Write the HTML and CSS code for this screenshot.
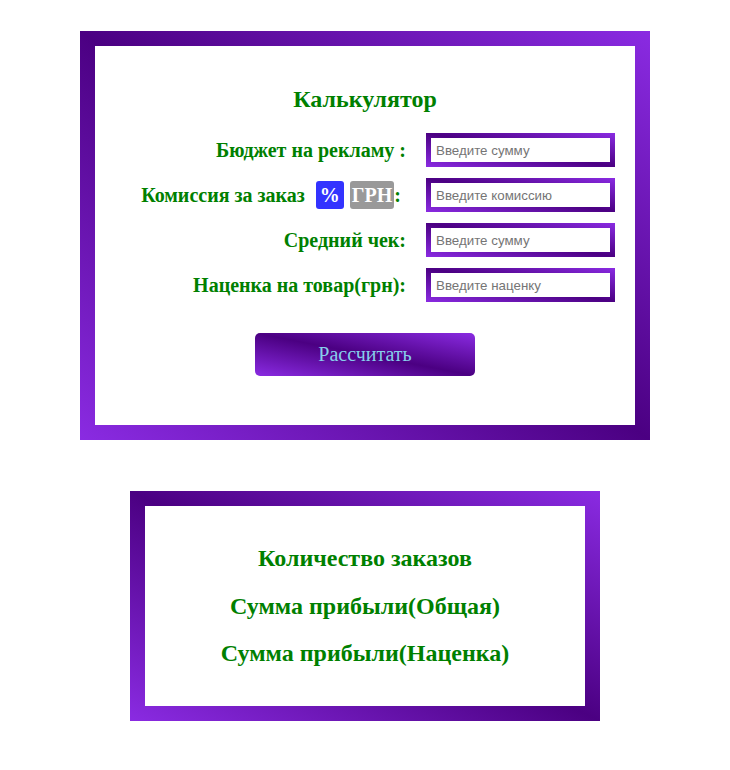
FILE: index.html
```html
<!DOCTYPE html>
<html lang="ru">
<head>
<meta charset="utf-8">
<title>Калькулятор</title>
<link rel="stylesheet" href="styles.css">
</head>
<body>
<main class="page">
  <section class="card calc">
    <h1 class="title">Калькулятор</h1>
    <form class="form">
      <label class="label" for="budget">Бюджет на рекламу :</label>
      <div class="field"><input id="budget" class="input" type="text" placeholder="Введите сумму"></div>

      <label class="label label-fee" for="fee">Комиссия за заказ <span class="badge badge-pct">%</span><span class="badge badge-uah">ГРН</span>:</label>
      <div class="field"><input id="fee" class="input" type="text" placeholder="Введите комиссию"></div>

      <label class="label" for="check">Средний чек:</label>
      <div class="field"><input id="check" class="input" type="text" placeholder="Введите сумму"></div>

      <label class="label" for="markup">Наценка на товар(грн):</label>
      <div class="field"><input id="markup" class="input" type="text" placeholder="Введите наценку"></div>
    </form>
    <div class="actions"><button class="btn" type="button">Рассчитать</button></div>
  </section>

  <section class="card results">
    <p class="result">Количество заказов</p>
    <p class="result">Сумма прибыли(Общая)</p>
    <p class="result">Сумма прибыли(Наценка)</p>
  </section>
</main>
</body>
</html>
```
FILE: styles.css
```css
html, body {
  margin: 0;
  padding: 0;
  background: #fff;
}
body {
  font-family: "Liberation Serif", "Times New Roman", serif;
}
.page {
  display: flex;
  flex-direction: column;
  align-items: center;
  padding-top: 31px;
  gap: 51px;
}
.card {
  box-sizing: border-box;
  border: 15px solid transparent;
  background: linear-gradient(#fff, #fff) padding-box,
              linear-gradient(to top right, #8a2be2, #4b0082, #8a2be2) border-box;
  display: flex;
  flex-direction: column;
}
.calc {
  width: 570px;
  height: 409px;
}
.title {
  margin: 0;
  padding-top: 39px;
  height: 48px;
  text-align: center;
  font-size: 24px;
  font-weight: bold;
  color: #008000;
  line-height: 28px;
  box-sizing: content-box;
}
.form {
  display: grid;
  grid-template-columns: 1fr 189px;
  column-gap: 20px;
  row-gap: 11px;
  padding: 0 20px;
  align-items: center;
}
.label {
  text-align: right;
  font-size: 20px;
  font-weight: bold;
  color: #008000;
  white-space: nowrap;
}
.label-fee {
  padding-right: 5px;
}
.badge {
  display: inline-block;
  padding: 3px 4px;
  border-radius: 3px;
  color: #fff;
  font-weight: bold;
  line-height: 22px;
}
.badge-pct {
  background: #3333ff;
  margin-left: 6px;
  margin-right: 6px;
}
.badge-uah {
  background: #999;
  padding: 3px 2px;
}
.field {
  height: 34px;
  box-sizing: border-box;
  padding: 5px;
  background: linear-gradient(to top right, #8a2be2, #4b0082, #8a2be2);
}
.input {
  display: block;
  width: 100%;
  height: 100%;
  box-sizing: border-box;
  border: 0;
  margin: 0;
  padding: 0 5px;
  background: #fff;
  font-family: "Liberation Sans", Arial, sans-serif;
  font-size: 13.333px;
  color: #333;
  outline: none;
}
.input::placeholder {
  color: #757575;
}
.actions {
  flex: 1;
  display: flex;
  justify-content: center;
  align-items: flex-start;
  padding-top: 31px;
}
.btn {
  width: 220px;
  height: 43px;
  border: 0;
  border-radius: 5px;
  background: linear-gradient(to top right, #8a2be2, #4b0082, #8a2be2);
  color: #87ceeb;
  font-family: "Liberation Serif", "Times New Roman", serif;
  font-size: 20px;
  cursor: pointer;
}
.results {
  width: 470px;
  height: 230px;
  padding-top: 38px;
}
.result {
  margin: 0 0 19.5px;
  text-align: center;
  font-size: 24px;
  font-weight: bold;
  color: #008000;
  line-height: 28px;
}
```
